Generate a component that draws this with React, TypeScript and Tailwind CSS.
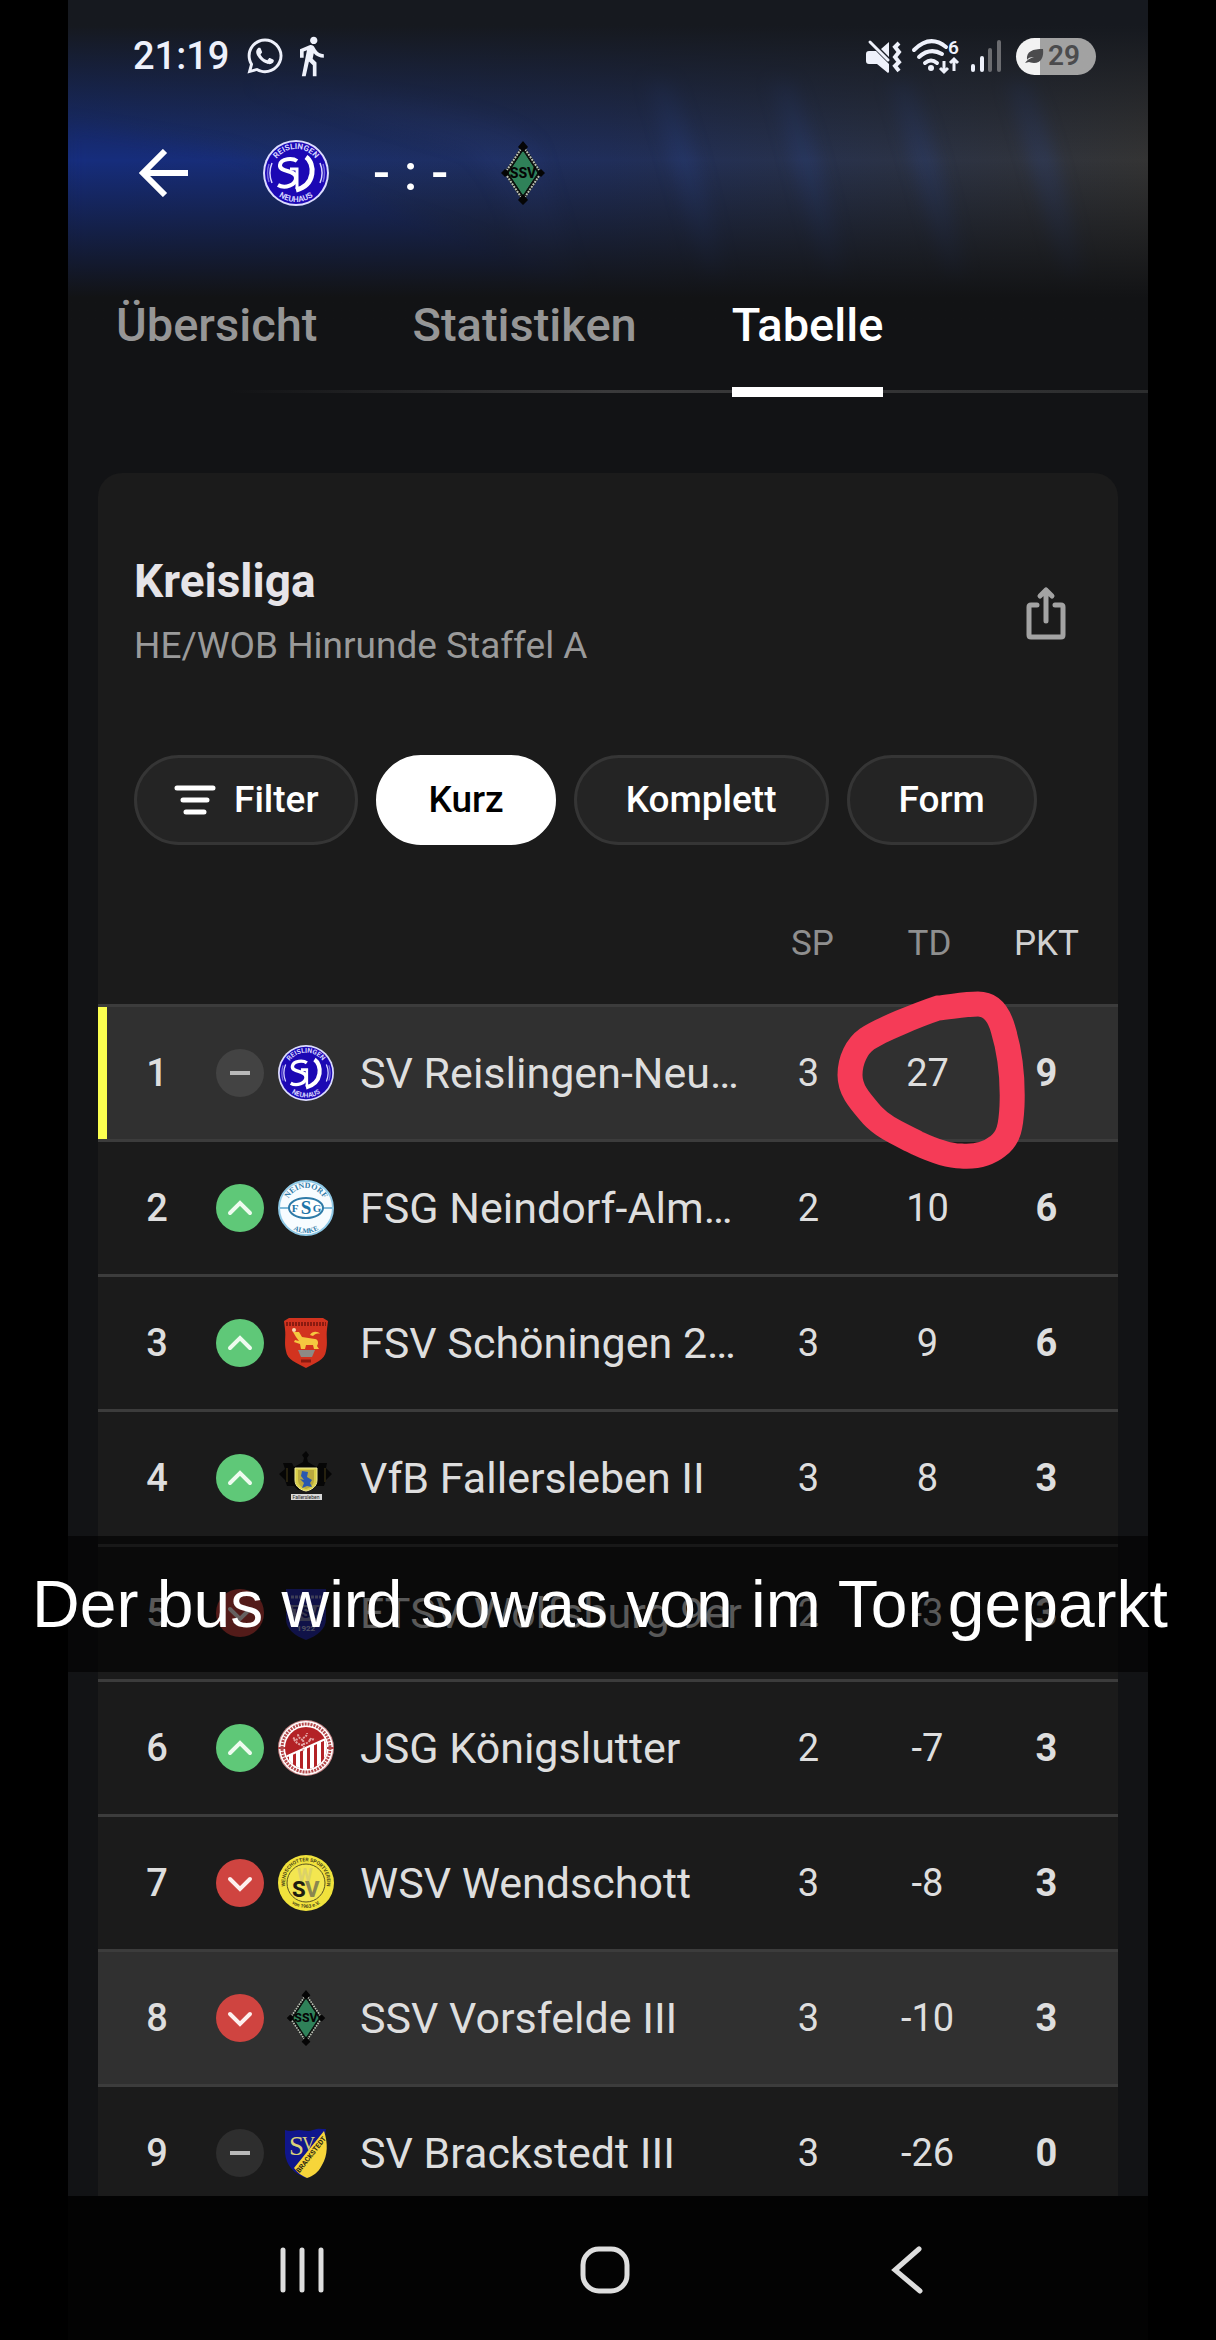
import { ReactNode, useId, useState } from 'react'
import clsx from 'clsx'
import { FaWhatsapp } from 'react-icons/fa'
import { MdDirectionsWalk } from 'react-icons/md'

type Trend = 'same' | 'up' | 'down'

type Team = {
  rank: number
  trend: Trend
  logo: ReactNode
  name: string
  played: number
  diff: number
  points: number
  marked?: boolean
}

function ReislingenLogo({ className }: { className: string }) {
  const id = useId()
  return (
    <svg viewBox="0 0 66 66" className={className} aria-hidden="true">
      <defs>
        <path id={`${id}t`} d="M9 33a24 24 0 0 1 48 0" />
        <path id={`${id}b`} d="M4 33a29 29 0 0 0 58 0" />
      </defs>
      <circle cx="33" cy="33" r="33" fill="#dcdcff" />
      <circle cx="33" cy="33" r="31" fill="#1c08b4" />
      <g fill="#d6d4ff" fontFamily="Roboto, sans-serif" fontWeight="700" fontSize="8" textAnchor="middle">
        <text>
          <textPath href={`#${id}t`} startOffset="50%">
            REISLINGEN
          </textPath>
        </text>
        <text>
          <textPath href={`#${id}b`} startOffset="50%">
            NEUHAUS
          </textPath>
        </text>
      </g>
      <g fill="none" stroke="#d6d4ff" strokeWidth="1.5">
        <path d="M9 23a26 26 0 0 0 0 20M57 23a26 26 0 0 1 0 20" />
        <path d="M6 24a29 29 0 0 0 0 18M60 24a29 29 0 0 1 0 18" opacity=".5" />
      </g>
      <g fill="none" stroke="#fff" strokeWidth="4">
        <path d="M34 21c-4-3-16-3-17 4-1 8 16 4 16 13 0 7-11 11-18 7" />
        <path d="M27 29h7v20" strokeWidth="3" />
        <path d="M43 17c9 6 10 28-10 33" strokeWidth="5" />
      </g>
    </svg>
  )
}

function VorsfeldeLogo({ className }: { className: string }) {
  return (
    <svg viewBox="0 0 44 64" className={className} aria-hidden="true">
      <path d="M22 3 41 32 22 61 3 32z" fill="#0b0f0d" />
      <path d="M20 8 6 29M24 8l14 21M6 35l14 21M38 35 24 56" stroke="#b9bdb2" strokeWidth="2" strokeDasharray="2 1" />
      <path d="M22 9 37 32 22 55 7 32z" fill="#2f8159" stroke="#0b0f0d" />
      <g fill="#050505">
        <path d="m22 0 5 6-5 5-5-5zM22 53l5 6-5 5-5-5zM0 32l4-4 4 4-4 4zM36 32l4-4 4 4-4 4z" />
        <text x="22" y="37" fontSize="14" fontWeight="800" fontFamily="Roboto, sans-serif" textAnchor="middle">
          SSV
        </text>
      </g>
    </svg>
  )
}

function NeindorfLogo() {
  const id = useId()
  return (
    <svg viewBox="0 0 56 56" className="size-14" aria-hidden="true">
      <defs>
        <path id={`${id}t`} d="M8 28a20 20 0 0 1 40 0" />
        <path id={`${id}b`} d="M3 28a25 25 0 0 0 50 0" />
      </defs>
      <circle cx="28" cy="28" r="27" fill="#f7fcff" stroke="#8fc9e6" strokeWidth="2" />
      <g fill="#2f7ba8" fontFamily="Liberation Serif, serif" fontWeight="700" textAnchor="middle">
        <text fontSize="8">
          <textPath href={`#${id}t`} startOffset="50%">
            NEINDORF
          </textPath>
        </text>
        <text fontSize="7">
          <textPath href={`#${id}b`} startOffset="50%">
            ALMKE
          </textPath>
        </text>
      </g>
      <path d="M2 28h52" stroke="#7fb9d8" strokeWidth="2" />
      <ellipse cx="28" cy="28" rx="17" ry="10" fill="#fff" stroke="#2f7ba8" strokeWidth="2" />
      <g fill="#1d74a8" fontFamily="Liberation Serif, serif" fontWeight="700" textAnchor="middle">
        <text x="17" y="32" fontSize="11">
          F
        </text>
        <text x="28" y="34" fontSize="19">
          S
        </text>
        <text x="39" y="32" fontSize="11">
          G
        </text>
      </g>
    </svg>
  )
}

function SchoeningenLogo() {
  return (
    <svg viewBox="0 0 56 56" className="size-14" aria-hidden="true">
      <path d="M6 6 11 3h34l5 3-1 8c-1 8 1 14-1 22-1 9-11 12-20 17-9-5-19-8-20-17-2-8 0-14-1-22z" fill="#d2331f" />
      <path d="M8 9h40" stroke="#8a1a10" strokeWidth="4" strokeDasharray="2 1" />
      <path
        d="M15 17h6l3 5 13 2c3 0 4 4 2 7l2 3h-5l-1-4h-7l-1 4h-4l-1-5-6-2 1-2 4 1-3-4zM32 20c2-4 8-4 10-1-3-1-5 0-7 2z"
        fill="#f5c840"
      />
      <circle cx="16" cy="15" r="2" fill="#f8d9b0" />
      <path d="M20 35h17l-3 7H23z" fill="#8d8a86" />
      <path d="M23 46h10" stroke="#8a1a10" strokeWidth="3" />
    </svg>
  )
}

function FallerslebenLogo() {
  return (
    <svg viewBox="0 0 56 56" className="size-14" aria-hidden="true">
      <path
        d="M28 1l3 4-2 3 1 4 5 3 4 2 2-4h8l-1 5 6 6-6 6-2 6h-8l-4 4H20l-4-4H9l-2-6-6-6 6-5-2-6h9l2 4 9-5 1-4-2-3z"
        fill="#060606"
      />
      <path d="M9 18v14M47 18v14" stroke="#26210f" strokeWidth="2" />
      <path d="M17 18h22v12c0 7-6 10-11 11-5-1-11-4-11-11z" fill="#d9cf4a" stroke="#f2ed9a" />
      <path d="M20 20h16v10c0 5-4 8-8 9-4-1-8-4-8-9z" fill="#b9a93f" />
      <path d="m24 21 6 1-1 5 5 3-2 3 2 4-5-1-5 2 2-5-4-4 4 1-3-4z" fill="#2957b0" />
      <path d="M13 44h31v6H13z" fill="#d8d8d8" />
      <text x="28" y="49" fontSize="5" fill="#222" fontFamily="Roboto, sans-serif" textAnchor="middle">
        Fallersleben
      </text>
    </svg>
  )
}

function WolfsburgLogo() {
  return (
    <svg viewBox="0 0 56 56" className="size-14" aria-hidden="true">
      <path d="M8 4h40v30c0 10-9 17-20 21C17 51 8 44 8 34z" fill="#2a2fb4" />
      <path d="M12 20h32v16H12z" fill="#8d90c4" />
      <text x="28" y="33" fontSize="14" fill="#20248c" fontFamily="Roboto, sans-serif" fontWeight="800" textAnchor="middle">
        TSV
      </text>
      <path d="M13 12h30" stroke="#9a9cd8" strokeWidth="3" strokeDasharray="3 1" />
      <text x="28" y="46" fontSize="8" fill="#c4c5ee" fontFamily="Roboto, sans-serif" fontWeight="700" textAnchor="middle">
        1922
      </text>
    </svg>
  )
}

function KoenigslutterLogo() {
  const id = useId()
  return (
    <svg viewBox="0 0 56 56" className="size-14" aria-hidden="true">
      <defs>
        <clipPath id={id}>
          <circle cx="28" cy="28" r="21" />
        </clipPath>
      </defs>
      <circle cx="28" cy="28" r="28" fill="#c98587" />
      <circle cx="28" cy="28" r="27" fill="#fff" />
      <circle cx="28" cy="28" r="24" fill="none" stroke="#b5484a" strokeWidth="3" strokeDasharray="2 1" />
      <path d="M0 28h8M48 28h8" stroke="#b5484a" strokeWidth="2" />
      <g clipPath={`url(#${id})`}>
        <path d="M0 0h56v56H0z" fill="#b32226" />
        <path d="M13 34v22M20 31v25M27 28v28M34 25v31M41 22v34M48 19v37" stroke="#fff" strokeWidth="4" />
        <path d="M5 38 52 17" stroke="#fff" strokeWidth="2" />
      </g>
      <path
        d="M25 31c2-5 0-9 0-12m0 6c-4 0-8-3-9-6m9 5c4 0 7-3 8-6m-8 2c-3-1-5-3-5-6m5 4c2-1 4-2 4-5m-14 5 5 2m11 0 6-1"
        stroke="#e3a5a5"
        strokeWidth="2"
        strokeDasharray="2 1"
        fill="none"
      />
    </svg>
  )
}

function WendschottLogo() {
  const id = useId()
  return (
    <svg viewBox="0 0 56 56" className="size-14" aria-hidden="true">
      <defs>
        <path id={`${id}t`} d="M10 38a21 21 0 1 1 36 0" />
        <path id={`${id}b`} d="M3 28a25 25 0 0 0 50 0" />
      </defs>
      <circle cx="28" cy="28" r="28" fill="#f0e23c" />
      <circle cx="28" cy="28" r="19" fill="#f3e650" stroke="#5a5420" />
      <g fill="#4a4518" fontFamily="Roboto, sans-serif" fontWeight="700" fontSize="5" textAnchor="middle">
        <text>
          <textPath href={`#${id}t`} startOffset="50%">
            WENDSCHOTTER SPORTVEREIN
          </textPath>
        </text>
        <text>
          <textPath href={`#${id}b`} startOffset="50%">
            von 1963 e.V.
          </textPath>
        </text>
      </g>
      <g fontFamily="Roboto, sans-serif" fontWeight="800">
        <text x="19" y="26" fontSize="18" fill="#dcd268">
          W
        </text>
        <text x="14" y="42" fontSize="22" fill="#1d1c10">
          S
        </text>
        <text x="27" y="42" fontSize="22" fill="#8a8650">
          V
        </text>
      </g>
    </svg>
  )
}

function BrackstedtLogo() {
  return (
    <svg viewBox="0 0 56 56" className="size-14" aria-hidden="true">
      <path d="M7 5c6 2 10 0 14 0s9 2 14 0 9-1 13-1c-2 8 1 14 0 23-1 12-9 22-20 26C16 49 8 40 7 28z" fill="#10168c" />
      <path d="M46 6c4 12 4 24-2 34-4 8-9 11-15 13-5-2-9-5-13-10z" fill="#f7d53a" />
      <g fontFamily="Liberation Serif, serif" fill="#d9d27a">
        <text x="11" y="30" fontSize="27">
          S
        </text>
        <text x="24" y="25" fontSize="18">
          V
        </text>
      </g>
      <text
        x="35"
        y="31"
        fontSize="7"
        fontWeight="700"
        fill="#2b2710"
        fontFamily="Roboto, sans-serif"
        textAnchor="middle"
        transform="rotate(-52 35 31)"
      >
        BRACKSTEDT
      </text>
    </svg>
  )
}

const teams: Team[] = [
  { rank: 1, trend: 'same', logo: <ReislingenLogo className="size-14" />, name: 'SV Reislingen-Neu…', played: 3, diff: 27, points: 9, marked: true },
  { rank: 2, trend: 'up', logo: <NeindorfLogo />, name: 'FSG Neindorf-Alm…', played: 2, diff: 10, points: 6 },
  { rank: 3, trend: 'up', logo: <SchoeningenLogo />, name: 'FSV Schöningen 2…', played: 3, diff: 9, points: 6 },
  { rank: 4, trend: 'up', logo: <FallerslebenLogo />, name: 'VfB Fallersleben II', played: 3, diff: 8, points: 3 },
  { rank: 5, trend: 'down', logo: <WolfsburgLogo />, name: 'ETSV Wolfsburg 9er', played: 2, diff: -3, points: 3 },
  { rank: 6, trend: 'up', logo: <KoenigslutterLogo />, name: 'JSG Königslutter', played: 2, diff: -7, points: 3 },
  { rank: 7, trend: 'down', logo: <WendschottLogo />, name: 'WSV Wendschott', played: 3, diff: -8, points: 3 },
  { rank: 8, trend: 'down', logo: <VorsfeldeLogo className="size-14" />, name: 'SSV Vorsfelde III', played: 3, diff: -10, points: 3, marked: true },
  { rank: 9, trend: 'same', logo: <BrackstedtLogo />, name: 'SV Brackstedt III', played: 3, diff: -26, points: 0 },
]

const tabs = ['Übersicht', 'Statistiken', 'Tabelle']
const views = ['Kurz', 'Komplett', 'Form']

function TrendIcon({ trend, marked }: { trend: Trend; marked?: boolean }) {
  const fill = trend === 'up' ? '#5fc878' : trend === 'down' ? '#cf4440' : marked ? '#434343' : '#2e2e2e'
  return (
    <svg viewBox="0 0 48 48" className="size-12" fill="none" strokeWidth="4" aria-hidden="true">
      <circle cx="24" cy="24" r="24" fill={fill} />
      {trend === 'same' && <path d="M14 24h20" stroke="#b9b9b9" />}
      {trend === 'up' && <path d="m14 29 10-10 10 10" stroke="#eefbef" strokeLinecap="round" />}
      {trend === 'down' && <path d="m14 20 10 10 10-10" stroke="#fdf0ee" strokeLinecap="round" />}
    </svg>
  )
}

function StatusBar() {
  return (
    <div className="relative flex h-28 items-center justify-between pr-[52px] pl-[65px] text-[#eef1fb]">
      <div className="flex items-center">
        <span className="text-[38px] font-medium">21:19</span>
        <FaWhatsapp size={40} className="ml-4" />
        <MdDirectionsWalk size={44} className="ml-1" />
      </div>
      <div className="flex items-center">
        <svg viewBox="0 0 36 34" className="mr-2.5 h-[34px] w-9" aria-hidden="true">
          <path d="M3 12h7l13 13v8l-1 1-11-9H3q-3 0-3-3v-7q0-3 3-3zM23 3v15l-8-8z" fill="currentColor" />
          <path d="M4 3 22 21" stroke="currentColor" strokeWidth="3" strokeLinecap="round" />
          <path d="m33 4-4 4 4 5-4 5 4 5-4 4 4 5" fill="none" stroke="currentColor" strokeWidth="4" />
        </svg>
        <svg
          viewBox="0 0 48 36"
          className="mr-2.5 h-9 w-12 overflow-visible"
          fill="none"
          stroke="currentColor"
          aria-hidden="true"
        >
          <path d="M2 12q16-16 32-3M7 19q11-10 23-3M13 25q6-5 12 0" strokeWidth="4" strokeLinecap="round" />
          <circle cx="19" cy="30" r="3" fill="currentColor" stroke="none" />
          <path d="M32 23v11m-4-4 4 4 4-4M42 33V21m-4 4 4-4 4 4" strokeWidth="3" />
          <text x="36" y="16" fontSize="19" fontWeight="600" fontFamily="Roboto, sans-serif" fill="currentColor" stroke="none">
            6
          </text>
        </svg>
        <svg viewBox="0 0 32 34" className="mr-3.5 h-[34px] w-8" strokeWidth="4" strokeLinecap="round" aria-hidden="true">
          <path d="M3 27v4M12 19v12" stroke="currentColor" />
          <path d="M20 11v20M29 3v28" stroke="#6b6c70" />
        </svg>
        <div className="flex h-[37px] w-20 items-center rounded-full bg-linear-to-r from-[#f2f2f2] from-30% to-[#a2a2a2] to-30% pl-2 text-[#4b4b4d]">
          <svg viewBox="0 0 20 16" className="h-4 w-5" aria-hidden="true">
            <path d="M19 1c1 8-2 14-9 14-3 0-4-1-5-1l-4 1c2-3 5-5 9-6-4 0-6 1-7 3C2 3 9 1 19 1z" fill="currentColor" />
          </svg>
          <span className="ml-1 text-[28px] font-semibold">29</span>
        </div>
      </div>
    </div>
  )
}

function Backdrop() {
  return (
    <div className="absolute inset-x-0 top-0 h-80 bg-linear-to-r from-[#172e78] via-[#202e5a] via-50% to-[#343434]">
      <svg viewBox="0 0 1080 320" preserveAspectRatio="none" className="size-full blur-sm" aria-hidden="true">
        <path d="M-20 120 160 150 400 235 520 280H-20z" fill="#132a8a" opacity=".35" />
        <path d="M180 85q240 10 290 60l50 170h-60q-10-120-60-165z" fill="#2c4390" opacity=".15" />
        <g fill="#2b4aa0" opacity=".2">
          <path d="M578 80h26q30 80 54 200h-22zM702 80h24q30 80 52 200h-22zM819 80h26q30 80 54 200h-22zM937 80h26q30 80 54 200h-22z" />
        </g>
      </svg>
      <div className="absolute inset-0 bg-linear-to-b from-[#16191f] from-8% to-transparent to-50%" />
      <div className="absolute inset-0 bg-linear-to-b from-transparent from-50% to-[#121315] to-93%" />
    </div>
  )
}

// hand-drawn marker ring round the goal difference
function MarkerRing() {
  return (
    <svg
      viewBox="824 974 208 198"
      className="pointer-events-none absolute top-1/2 left-1/2 h-[198px] w-[208px] max-w-none -translate-1/2"
      aria-hidden="true"
    >
      <path
        d="M850 1075C850 1060 857 1046 867 1039 880 1030 920 1014 938 1008 950 1007 965 1004 978 1004 992 1004 999 1015 1003 1029 1010 1052 1013 1080 1012 1106 1011 1126 1009 1138 998 1146 988 1154 974 1157 961 1156 948 1156 932 1150 917 1143 900 1134 884 1128 872 1115 861 1102 850 1091 850 1075z"
        fill="none"
        stroke="#f53b57"
        strokeWidth="25"
        strokeLinejoin="round"
      />
    </svg>
  )
}

export default function App() {
  const [tab, setTab] = useState('Tabelle')
  const [view, setView] = useState('Kurz')

  return (
    <div className="relative min-h-screen overflow-hidden bg-black font-['Roboto',sans-serif]">
      <div className="relative mx-auto min-h-screen max-w-[1080px] overflow-hidden bg-[#121315]">
        <Backdrop />
        <StatusBar />

        <header className="relative flex h-[122px] items-center pl-[70px] text-white">
          <button type="button" aria-label="Zurück">
            <svg viewBox="0 0 50 48" className="h-12 w-[50px]" fill="none" stroke="currentColor" strokeWidth="6">
              <path d="M50 24H5M27 2 5 24l22 22" />
            </svg>
          </button>
          <ReislingenLogo className="ml-[75px] size-[66px]" />
          <div className="ml-11 flex items-center gap-3.5 text-[50px] leading-none font-medium">
            <span>-</span>
            <span>:</span>
            <span>-</span>
          </div>
          <VorsfeldeLogo className="ml-[53px] h-16 w-11" />
        </header>

        <nav className="relative flex gap-[95px] pl-12">
          <div className="absolute inset-x-0 bottom-1 h-[3px] bg-linear-to-r from-transparent from-15% via-[#3a3a3b] via-50% to-[#2c2d2e]" />
          {tabs.map((name) => (
            <button
              key={name}
              type="button"
              onClick={() => setTab(name)}
              className={clsx(
                'relative border-b-10 pt-16 pb-[35px] text-[47px] leading-[54px] font-medium',
                tab === name ? 'border-white text-white' : 'border-transparent text-[#969696]',
              )}
            >
              {name}
            </button>
          ))}
        </nav>

        <main className="relative mx-[30px] mt-[76px] rounded-t-3xl bg-[#1b1b1b]">
          <div className="flex items-center justify-between pt-[81px] pr-12 pl-9">
            <div>
              <h1 className="text-[46px] leading-[54px] font-bold text-[#e6e4e8]">Kreisliga</h1>
              <p className="mt-4 text-[37px] leading-[44px] text-[#9a9a9a]">HE/WOB Hinrunde Staffel A</p>
            </div>
            <button type="button" aria-label="Teilen" className="mt-1 text-[#a3a3a3]">
              <svg
                viewBox="0 0 48 54"
                className="h-[54px] w-12"
                fill="none"
                stroke="currentColor"
                strokeWidth="5"
                strokeLinecap="round"
                strokeLinejoin="round"
              >
                <path d="M15 19H9q-2 0-2 2v28q0 2 2 2h30q2 0 2-2V21q0-2-2-2h-6M24 35V4M18 10l6-6 6 6" />
              </svg>
            </button>
          </div>

          <div className="mt-[87px] flex gap-[18px] pl-9 text-[37px] font-medium">
            <button
              type="button"
              className="flex h-[90px] items-center gap-[18px] rounded-full border-3 border-[#353535] bg-[#242424] px-[37px] text-white"
            >
              <svg viewBox="0 0 42 30" className="h-[30px] w-[42px]" stroke="currentColor" strokeWidth="5" strokeLinecap="round">
                <path d="M3 3h36M9 15h24M12 27h18" />
              </svg>
              Filter
            </button>
            {views.map((name) => (
              <button
                key={name}
                type="button"
                onClick={() => setView(name)}
                className={clsx(
                  'h-[90px] rounded-full border-3 px-[49px]',
                  view === name ? 'border-white bg-white text-black' : 'border-[#353535] bg-[#242424] text-white',
                )}
              >
                {name}
              </button>
            ))}
          </div>

          <table className="w-full table-fixed border-separate border-spacing-0 text-[38px] text-[#dedede]">
            <colgroup>
              <col className="w-[118px]" />
              <col className="w-[62px]" />
              <col className="w-[82px]" />
              <col />
              <col className="w-[119px]" />
              <col className="w-[119px]" />
              <col className="w-[131px]" />
            </colgroup>
            <thead>
              <tr className="h-[162px] text-[35px] *:border-b-3 *:border-[#3c3c3c] *:pt-10 *:font-normal">
                <th colSpan={4} />
                <th className="pl-2 text-[#8f8f8f]">SP</th>
                <th className="pl-1 text-[#8f8f8f]">TD</th>
                <th className="pr-3 text-[#d0d0d0]">PKT</th>
              </tr>
            </thead>
            <tbody>
              {teams.map((team) => (
                <tr
                  key={team.rank}
                  className={clsx('h-[135px] *:border-b-3 *:border-[#3c3c3c]', team.marked && 'bg-[#303030]')}
                >
                  <td className="relative p-0 text-center font-medium">
                    {team.rank === 1 && <span className="absolute inset-y-0 left-0 w-[9px] bg-[#fbff4f]" />}
                    {team.rank}
                  </td>
                  <td className="p-0">
                    <TrendIcon trend={team.trend} marked={team.marked} />
                  </td>
                  <td className="p-0">{team.logo}</td>
                  <td className="truncate p-0 text-[43px]">{team.name}</td>
                  <td className="p-0 text-center">{team.played}</td>
                  <td className="relative p-0 text-center">
                    {team.diff}
                    {team.rank === 1 && <MarkerRing />}
                  </td>
                  <td className="p-0 pr-3 text-center font-bold">{team.points}</td>
                </tr>
              ))}
            </tbody>
          </table>
        </main>
      </div>

      <p className="absolute inset-x-0 top-[1536px] flex h-[136px] items-center justify-center bg-black/60 pr-4 font-['Liberation_Sans',sans-serif] text-[66px] whitespace-nowrap text-white">
        Der bus wird sowas von im Tor geparkt
      </p>

      <nav className="fixed inset-x-0 bottom-0 bg-black">
        <div className="mx-auto flex h-36 max-w-[1080px] items-center justify-between bg-[#030303] pt-1 pr-[201px] pl-[194px] text-[#dedede]">
          <button type="button" aria-label="Letzte Apps" className="flex w-20 justify-center">
            <svg viewBox="0 0 44 48" className="h-12 w-11" stroke="currentColor" strokeWidth="5" strokeLinecap="round">
              <path d="M3 4v40M22 4v40M41 4v40" />
            </svg>
          </button>
          <button type="button" aria-label="Startseite" className="flex w-20 justify-center">
            <svg viewBox="0 0 50 48" className="h-12 w-[50px]" fill="none" stroke="currentColor" strokeWidth="5">
              <rect x="3" y="3" width="44" height="42" rx="16" />
            </svg>
          </button>
          <button type="button" aria-label="Zurück" className="flex w-20 justify-center">
            <svg viewBox="0 0 32 48" className="h-12 w-8" fill="none" stroke="currentColor" strokeWidth="5" strokeLinecap="round">
              <path d="M28 3 4 24l25 21" />
            </svg>
          </button>
        </div>
      </nav>
    </div>
  )
}
